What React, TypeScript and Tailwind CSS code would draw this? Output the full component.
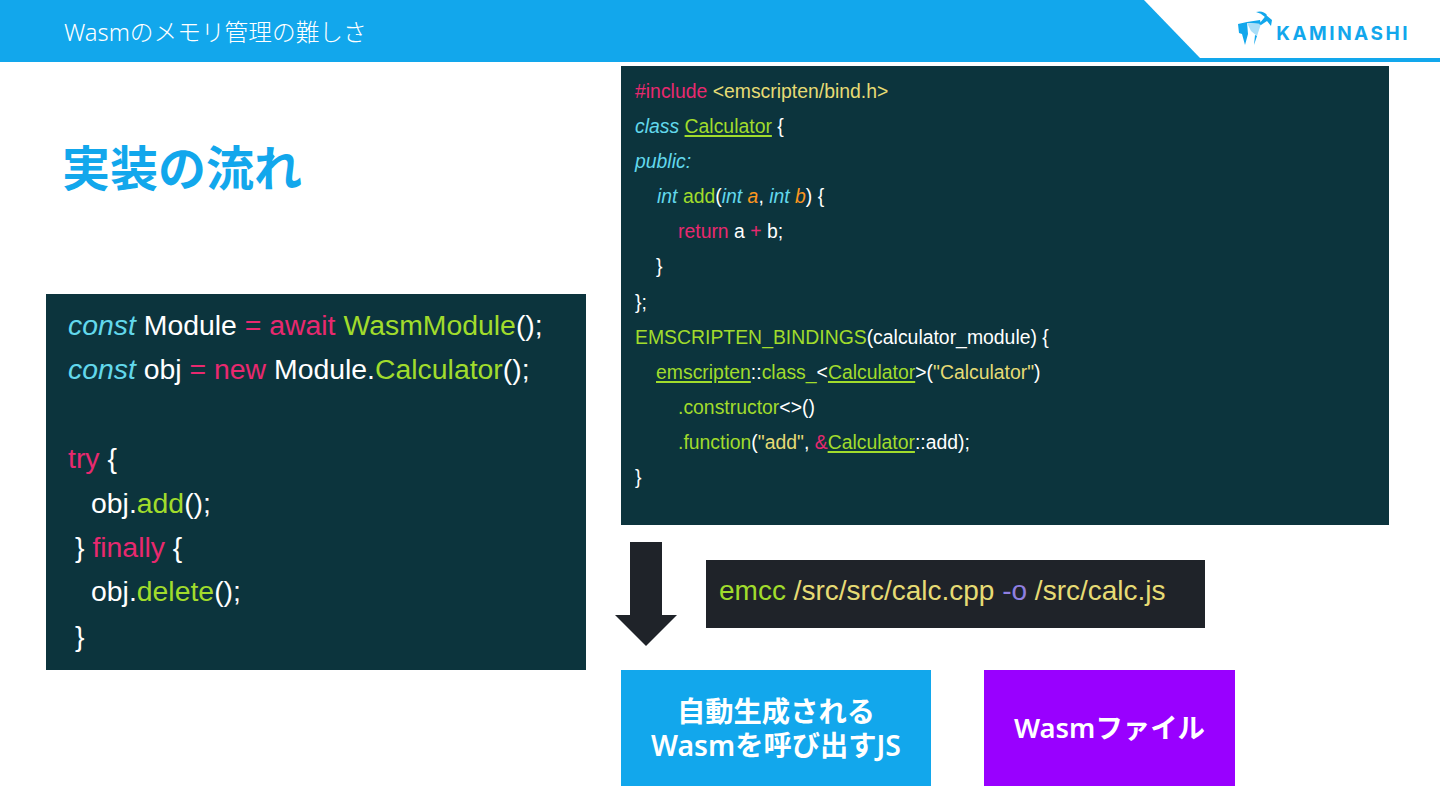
import React from 'react';

const PINK = 'text-[#e8296f]';
const GREEN = 'text-[#a1dc2c]';
const CYAN = 'text-[#62d8ec] italic';
const YELLOW = 'text-[#e6db74]';
const ORANGE = 'text-[#fd971f] italic';
const ULINE = 'text-[#a1dc2c] underline underline-offset-[2px] decoration-[1.5px]';

type Seg = [string, string?];

const leftCode: { indent: string; segs: Seg[] }[] = [
  { indent: '', segs: [['const', CYAN], [' Module '], ['= await', PINK], [' '], ['WasmModule', GREEN], ['();']] },
  { indent: '', segs: [['const', CYAN], [' obj '], ['= new', PINK], [' Module.'], ['Calculator', GREEN], ['();']] },
  { indent: '', segs: [['\u00a0']] },
  { indent: '', segs: [['try', PINK], [' {']] },
  { indent: 'pl-[23px]', segs: [['obj.'], ['add', GREEN], ['();']] },
  { indent: 'pl-[7px]', segs: [['} '], ['finally', PINK], [' {']] },
  { indent: 'pl-[23px]', segs: [['obj.'], ['delete', GREEN], ['();']] },
  { indent: 'pl-[7px]', segs: [['}']] },
];

const rightCode: { indent: string; segs: Seg[] }[] = [
  { indent: '', segs: [['#include', PINK], [' '], ['<emscripten/bind.h>', YELLOW]] },
  { indent: '', segs: [['class', CYAN], [' '], ['Calculator', ULINE], [' {']] },
  { indent: '', segs: [['public:', CYAN]] },
  { indent: 'pl-[22px]', segs: [['int', CYAN], [' '], ['add', GREEN], ['('], ['int', CYAN], [' '], ['a', ORANGE], [', '], ['int', CYAN], [' '], ['b', ORANGE], [') {']] },
  { indent: 'pl-[43px]', segs: [['return', PINK], [' a '], ['+', PINK], [' b;']] },
  { indent: 'pl-[21px]', segs: [['}']] },
  { indent: '', segs: [['};']] },
  { indent: '', segs: [['EMSCRIPTEN_BINDINGS', GREEN], ['(calculator_module) {']] },
  { indent: 'pl-[21px]', segs: [['emscripten', ULINE], ['::'], ['class_', GREEN], ['<'], ['Calculator', ULINE], ['>('], ['"Calculator"', YELLOW], [')']] },
  { indent: 'pl-[43px]', segs: [['.constructor', GREEN], ['<>()']] },
  { indent: 'pl-[43px]', segs: [['.function', GREEN], ['('], ['"add"', YELLOW], [', '], ['&', PINK], ['Calculator', ULINE], ['::add);']] },
  { indent: '', segs: [['}']] },
];

function CodeLine({ indent, segs, className }: { indent: string; segs: Seg[]; className: string }) {
  return (
    <div className={`whitespace-pre ${indent} ${className}`}>
      {segs.map(([text, color], i) => (
        <span key={i} className={color}>{text}</span>
      ))}
    </div>
  );
}

function GoatLogo() {
  return (
    <svg width="36" height="35" viewBox="0 0 36 35" className="shrink-0">
      <path d="M0 13 L9 11 L10 23 L7 34 L4 23 L1 22 Z" fill="#12a7ec" />
      <path d="M9 11 L22 9 L23 13 L9 12 Z" fill="#12a7ec" />
      <path d="M9 12 L23 13 L19 25 L13 20 Z" fill="#a9def8" />
      <path d="M23 13 L16 34 L17 24 L19 25 Z" fill="#12a7ec" />
      <path d="M21 13 L26 7 L28 4 L34 9 L33 15 L29 10 L23 14 Z" fill="#12a7ec" />
      <path d="M18 1 Q25 -1 29 4 L27 6 Q23 2 18 1 Z" fill="#12a7ec" />
    </svg>
  );
}

export default function App() {
  return (
    <div className="w-[1440px] h-[810px] overflow-hidden bg-white flex flex-col font-['Liberation_Sans',sans-serif]">
      <header className="relative h-[62px] shrink-0 bg-[#12a7ec] flex items-center pl-[64px]">
        <span className="pt-[3px] text-[23.7px] text-white font-light font-['Noto_Sans','Noto_Sans_CJK_JP',sans-serif]">
          Wasmのメモリ管理の難しさ
        </span>
        <div className="absolute right-0 top-0 h-[58px] w-[296px] bg-white [clip-path:polygon(0_0,100%_0,100%_100%,56px_100%)] flex items-center justify-end pr-[30px]">
          <div className="flex items-center gap-[2px] -mt-[2px]">
            <GoatLogo />
            <span className="mt-[11px] text-[19px] leading-none font-bold tracking-[2.5px] text-[#12a7ec] font-['Inter',sans-serif]">KAMINASHI</span>
          </div>
        </div>
      </header>

      <main className="flex-1 flex">
        <section className="w-[621px] shrink-0 pl-[46px] flex flex-col">
          <h1 className="pl-[16px] mt-[75px] text-[48px] leading-[56px] font-bold text-[#12a7ec] font-['Noto_Sans_CJK_JP',sans-serif]">
            実装の流れ
          </h1>
          <div className="mt-[101px] w-[540px] h-[376px] bg-[#0c343d] pl-[22px] pt-[9px] text-white">
            {leftCode.map((l, i) => (
              <CodeLine key={i} indent={l.indent} segs={l.segs} className="text-[28.4px] leading-[44.4px]" />
            ))}
          </div>
        </section>

        <section className="flex-1 pt-[4px] flex flex-col">
          <div className="w-[768px] h-[459px] bg-[#0c343d] pl-[14px] pt-[8px] text-white">
            {rightCode.map((l, i) => (
              <CodeLine key={i} indent={l.indent} segs={l.segs} className="text-[19.4px] leading-[35.1px]" />
            ))}
          </div>

          <div className="flex mt-[17px] -ml-[6px]">
            <svg width="62" height="104" viewBox="0 0 62 104" className="shrink-0">
              <path d="M15 0 H47 V73 H62 L31 104 L0 73 H15 Z" fill="#1f2329" />
            </svg>
            <div className="ml-[29px] mt-[18px] w-[499px] h-[68px] bg-[#1f2329] pl-[13px] pb-[7px] flex items-center text-[28px] whitespace-pre">
              <span className={GREEN}>emcc</span>
              <span className={YELLOW}> /src/src/calc.cpp </span>
              <span className="text-[#8f7fe0]">-o</span>
              <span className={YELLOW}> /src/calc.js</span>
            </div>
          </div>

          <div className="flex mt-[24px] gap-[53px] text-white font-semibold text-center font-['Noto_Sans','Noto_Sans_CJK_JP',sans-serif]">
            <div className="w-[310px] h-[116px] bg-[#12a7ec] flex items-center justify-center text-[28.3px] leading-[34px]">
              <div>自動生成される<br />Wasmを呼び出すJS</div>
            </div>
            <div className="w-[251px] h-[116px] bg-[#9900ff] flex items-center justify-center text-[27.4px]">
              Wasmファイル
            </div>
          </div>
        </section>
      </main>
    </div>
  );
}
